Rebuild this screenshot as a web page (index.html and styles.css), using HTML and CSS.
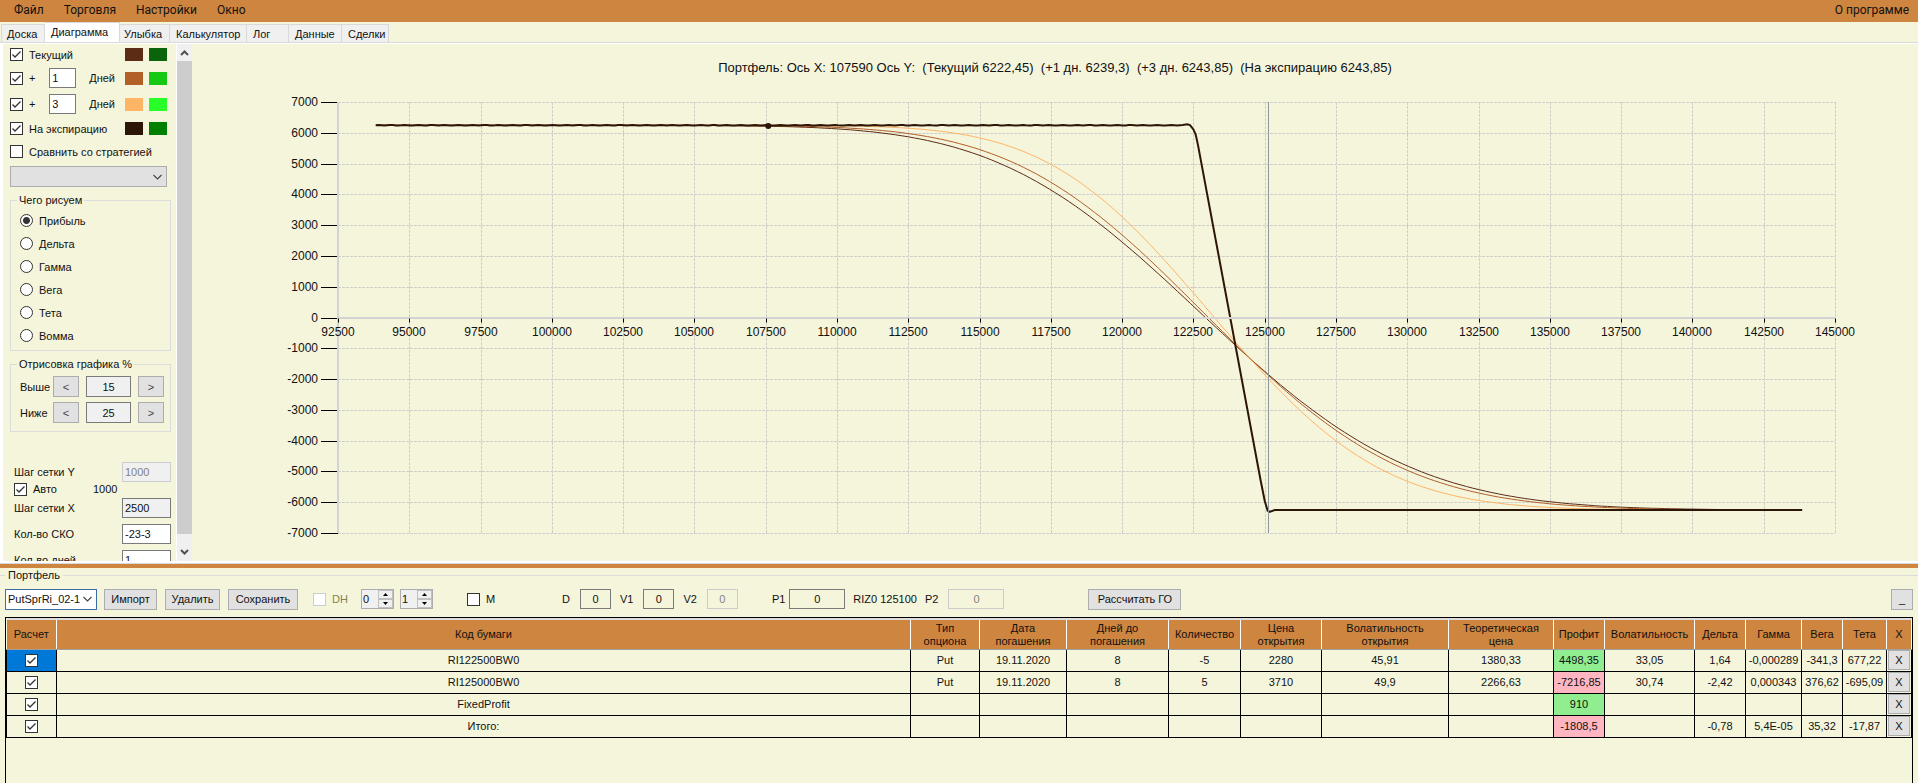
FILE: index.html
```html
<!DOCTYPE html>
<html lang="ru">
<head>
  <meta charset="UTF-8">
  <meta name="viewport" content="width=device-width, initial-scale=1.0">
  <link rel="stylesheet" href="styles.css">
  <title>Портфель</title>
</head>
<body>

<nav class="menu-bar">
  <button class="menu-item">Файл</button>
  <button class="menu-item">Торговля</button>
  <button class="menu-item">Настройки</button>
  <button class="menu-item">Окно</button>
  <button class="menu-item menu-about">О программе</button>
</nav>

<div class="tabs" role="tablist">
  <button class="tab tab-board" role="tab">Доска</button>
  <button class="tab tab-chart tab-active" role="tab" aria-selected="true">Диаграмма</button>
  <button class="tab tab-smile" role="tab">Улыбка</button>
  <button class="tab tab-calc" role="tab">Калькулятор</button>
  <button class="tab tab-log" role="tab">Лог</button>
  <button class="tab tab-data" role="tab">Данные</button>
  <button class="tab tab-deals" role="tab">Сделки</button>
</div>

<main class="workspace">
  <aside class="sidebar">
    <div class="lines">
      <div class="line-row">
        <label class="check-label"><input type="checkbox" checked>Текущий</label>
        <span class="swatch color-now"></span><span class="swatch color-now-alt"></span>
      </div>
      <div class="line-row">
        <label class="check-label"><input type="checkbox" checked>+</label>
        <input class="field days-field" id="days1" type="text" value="1">
        <label class="days-label" for="days1">Дней</label>
        <span class="swatch color-first"></span><span class="swatch color-first-alt"></span>
      </div>
      <div class="line-row">
        <label class="check-label"><input type="checkbox" checked>+</label>
        <input class="field days-field" id="days2" type="text" value="3">
        <label class="days-label" for="days2">Дней</label>
        <span class="swatch color-second"></span><span class="swatch color-second-alt"></span>
      </div>
      <div class="line-row">
        <label class="check-label"><input type="checkbox" checked>На экспирацию</label>
        <span class="swatch color-exp"></span><span class="swatch color-exp-alt"></span>
      </div>
      <div class="line-row">
        <label class="check-label"><input type="checkbox">Сравнить со стратегией</label>
      </div>
    </div>
    <select class="combo strategy-combo" aria-label="Стратегия"><option></option></select>

    <fieldset class="group">
      <legend>Чего рисуем</legend>
      <label class="radio-label"><input type="radio" name="greek" checked>Прибыль</label>
      <label class="radio-label"><input type="radio" name="greek">Дельта</label>
      <label class="radio-label"><input type="radio" name="greek">Гамма</label>
      <label class="radio-label"><input type="radio" name="greek">Вега</label>
      <label class="radio-label"><input type="radio" name="greek">Тета</label>
      <label class="radio-label"><input type="radio" name="greek">Вомма</label>
    </fieldset>

    <fieldset class="group range-group">
      <legend>Отрисовка графика %</legend>
      <div class="range-row">
        <label for="above">Выше</label>
        <button class="btn step-btn">&lt;</button>
        <input class="field range-field" id="above" type="text" value="15">
        <button class="btn step-btn">&gt;</button>
      </div>
      <div class="range-row">
        <label for="below">Ниже</label>
        <button class="btn step-btn">&lt;</button>
        <input class="field range-field" id="below" type="text" value="25">
        <button class="btn step-btn">&gt;</button>
      </div>
    </fieldset>

    <div class="settings">
      <div class="settings-row">
        <label for="stepY">Шаг сетки Y</label>
        <input class="field settings-field" id="stepY" type="text" value="1000" disabled>
      </div>
      <div class="auto-row">
        <label class="check-label"><input type="checkbox" checked>Авто</label>
        <span>1000</span>
      </div>
      <div class="settings-row">
        <label for="stepX">Шаг сетки X</label>
        <input class="field settings-field field-gray" id="stepX" type="text" value="2500">
      </div>
      <div class="settings-row">
        <label for="sko">Кол-во СКО</label>
        <input class="field settings-field" id="sko" type="text" value="-23-3">
      </div>
      <div class="settings-row">
        <label for="dayCount">Кол-во дней</label>
        <input class="field settings-field" id="dayCount" type="text" value="1">
      </div>
    </div>
  </aside>

  <div class="scrollbar">
    <button class="scroll-btn" aria-label="Вверх"><svg width="9" height="6" viewBox="0 0 9 6"><path d="M1 5 L4.5 1.5 L8 5" fill="none" stroke="#505050" stroke-width="2"/></svg></button>
    <div class="scroll-thumb"></div>
    <button class="scroll-btn scroll-down" aria-label="Вниз"><svg width="9" height="6" viewBox="0 0 9 6"><path d="M1 1 L4.5 4.5 L8 1" fill="none" stroke="#505050" stroke-width="2"/></svg></button>
  </div>

  <section class="chart">
    <svg class="chart-svg" id="chart"></svg>
  </section>
</main>

<div class="splitter"></div>

<section class="portfolio">
  <div class="portfolio-title">Портфель</div>

  <div class="toolbar">
    <select class="combo portfolio-combo" aria-label="Портфель"><option>PutSprRi_02-1</option></select>
    <div class="tool-group tool-buttons">
      <button class="btn btn-import">Импорт</button>
      <button class="btn btn-delete">Удалить</button>
      <button class="btn btn-save">Сохранить</button>
    </div>
    <div class="tool-group tool-dh">
      <label class="check-label dh-label"><input type="checkbox" disabled>DH</label>
      <div class="spin">
        <input type="text" value="0" aria-label="DH от">
        <div class="spin-buttons">
          <button aria-label="Больше"><svg width="5" height="3"><path d="M0 3 L2.5 0 L5 3Z"/></svg></button>
          <button aria-label="Меньше"><svg width="5" height="3"><path d="M0 0 L2.5 3 L5 0Z"/></svg></button>
        </div>
      </div>
      <div class="spin">
        <input type="text" value="1" aria-label="DH до">
        <div class="spin-buttons">
          <button aria-label="Больше"><svg width="5" height="3"><path d="M0 3 L2.5 0 L5 3Z"/></svg></button>
          <button aria-label="Меньше"><svg width="5" height="3"><path d="M0 0 L2.5 3 L5 0Z"/></svg></button>
        </div>
      </div>
    </div>
    <label class="check-label tool-m"><input type="checkbox">M</label>
    <div class="tool-group tool-values">
      <label class="value">D<input class="field value-field" type="text" value="0"></label>
      <label class="value">V1<input class="field value-field" type="text" value="0"></label>
      <label class="value">V2<input class="field value-field" type="text" value="0" disabled></label>
    </div>
    <div class="tool-group tool-prices">
      <label class="value price">P1<input class="field price-field" type="text" value="0"></label>
      <span>RIZ0 125100</span>
      <label class="value">P2<input class="field price-field" type="text" value="0" disabled></label>
    </div>
    <button class="btn btn-calc">Рассчитать ГО</button>
    <button class="btn btn-hide">_</button>
  </div>

  <div class="table-wrap">
    <table class="positions">
      <colgroup>
        <col class="w-calc"><col><col class="w-type"><col class="w-date"><col class="w-days"><col class="w-count"><col class="w-price"><col class="w-vol-open"><col class="w-theor"><col class="w-profit"><col class="w-vol"><col class="w-delta"><col class="w-gamma"><col class="w-vega"><col class="w-theta"><col class="w-x">
      </colgroup>
      <thead>
        <tr>
          <th>Расчет</th><th>Код бумаги</th><th>Тип<br>опциона</th><th>Дата<br>погашения</th><th>Дней до<br>погашения</th><th>Количество</th><th>Цена<br>открытия</th><th>Волатильность<br>открытия</th><th>Теоретическая<br>цена</th><th>Профит</th><th>Волатильность</th><th>Дельта</th><th>Гамма</th><th>Вега</th><th>Тета</th><th>X</th>
        </tr>
      </thead>
      <tbody>
        <tr>
          <td class="selected"><input type="checkbox" aria-label="Расчет" checked></td><td>RI122500BW0</td><td>Put</td><td>19.11.2020</td><td>8</td><td>-5</td><td>2280</td><td>45,91</td><td>1380,33</td><td class="gain">4498,35</td><td>33,05</td><td>1,64</td><td>-0,000289</td><td>-341,3</td><td>677,22</td><td><button class="btn btn-x">X</button></td>
        </tr>
        <tr>
          <td><input type="checkbox" aria-label="Расчет" checked></td><td>RI125000BW0</td><td>Put</td><td>19.11.2020</td><td>8</td><td>5</td><td>3710</td><td>49,9</td><td>2266,63</td><td class="loss">-7216,85</td><td>30,74</td><td>-2,42</td><td>0,000343</td><td>376,62</td><td>-695,09</td><td><button class="btn btn-x">X</button></td>
        </tr>
        <tr>
          <td><input type="checkbox" aria-label="Расчет" checked></td><td>FixedProfit</td><td></td><td></td><td></td><td></td><td></td><td></td><td></td><td class="gain">910</td><td></td><td></td><td></td><td></td><td></td><td><button class="btn btn-x">X</button></td>
        </tr>
        <tr>
          <td><input type="checkbox" aria-label="Расчет" checked></td><td>Итого:</td><td></td><td></td><td></td><td></td><td></td><td></td><td></td><td class="loss">-1808,5</td><td></td><td>-0,78</td><td>5,4E-05</td><td>35,32</td><td>-17,87</td><td><button class="btn btn-x">X</button></td>
        </tr>
      </tbody>
    </table>
  </div>
</section>

<script src="chart.js"></script>
</body>
</html>
```
FILE: styles.css
```css
* {
  box-sizing: border-box;
}

body {
  margin: 0;
  height: 100vh;
  display: flex;
  flex-direction: column;
  overflow: hidden;
  background-color: #f5f5dc;
  color: #111;
  font-family: "Liberation Sans", Arial, sans-serif;
  font-size: 11px;
  line-height: 14px;
}

button, input, select {
  font: inherit;
  color: inherit;
  margin: 0;
  padding: 0;
}

/* menu */
.menu-bar {
  display: flex;
  align-items: center;
  height: 22px;
  padding: 0 9px 2px 6px;
  background-color: #cd853f;
  font-family: Roboto, sans-serif;
  font-size: 12px;
}

.menu-item {
  border: 0;
  background: none;
  padding: 0 8px;
  margin-right: 4px;
}

.menu-about {
  margin-left: auto;
  margin-right: 0;
  padding-right: 0;
}

/* tabs */
.tabs {
  display: flex;
  align-items: flex-end;
  height: 21px;
  padding-left: 1px;
  border-bottom: 1px solid #d9d9d9;
}

.tab {
  height: 18px;
  border: 1px solid #d9d9d9;
  border-left-width: 0;
  border-bottom: 0;
  background-color: #f0f0f0;
  text-align: left;
  padding-left: 6px;
  white-space: nowrap;
}

.tab-active {
  height: 20px;
  padding-bottom: 2px;
  background-color: #fff;
}

.tab-board { width: 44px; border-left-width: 1px; padding-left: 5px; }
.tab-chart { width: 75px; }
.tab-smile { width: 50px; padding-left: 4px; }
.tab-calc { width: 77px; }
.tab-log { width: 42px; }
.tab-data { width: 53px; }
.tab-deals { width: 47px; }

.workspace {
  flex: 1;
  min-height: 0;
  display: flex;
  border-top: 1px solid #fff;
  border-bottom: 2px solid #fff;
  border-left: 3px solid #fff;
}

/* controls */
input[type="checkbox"], input[type="radio"] {
  appearance: none;
  flex: none;
  width: 13px;
  height: 13px;
  border: 1px solid #333;
  background: #fff center / 11px 11px no-repeat;
}

input[type="checkbox"]:checked {
  background-image: url("data:image/svg+xml,%3Csvg xmlns='http://www.w3.org/2000/svg' viewBox='0 0 11 11'%3E%3Cpath d='M1.5 5.5 L4 8 L9.5 2.5' fill='none' stroke='%23333' stroke-width='1.3'/%3E%3C/svg%3E");
}

input[type="checkbox"]:disabled {
  border-color: #ccc;
}

input[type="radio"] {
  border-radius: 50%;
}

input[type="radio"]:checked {
  background-image: radial-gradient(circle, #333 3px, transparent 4px);
}

.check-label {
  display: flex;
  align-items: center;
  gap: 6px;
  white-space: nowrap;
}

.field {
  min-width: 0;
  border: 1px solid #7a7a7a;
  background-color: #fff;
  padding: 0 2px;
}

.field:disabled {
  border-color: #ccc;
  background-color: #f0f0f0;
  color: #838383;
}

.btn {
  border: 1px solid #adadad;
  background-color: #e1e1e1;
  white-space: nowrap;
}

.combo {
  appearance: none;
  height: 21px;
  border: 1px solid #adadad;
  border-radius: 0;
  background: #e1e1e1 url("data:image/svg+xml,%3Csvg xmlns='http://www.w3.org/2000/svg' viewBox='0 0 9 6'%3E%3Cpath d='M.5 1 L4.5 5 L8.5 1' fill='none' stroke='%23444' stroke-width='1.1'/%3E%3C/svg%3E") right 4px center / 9px 6px no-repeat;
}

/* sidebar */
.sidebar {
  flex: none;
  width: 173px;
  padding: 0 5px 0 7px;
  overflow: hidden;
}

.lines {
  display: grid;
  grid-template-rows: 21px 26px 26px 23px 23px;
}

.line-row {
  display: flex;
  align-items: center;
  padding-right: 4px;
}

.line-row .check-label {
  flex: 1;
}

.days-field {
  width: 27px;
  height: 20px;
}

.days-label {
  margin: 0 10px 0 13px;
}

.swatch {
  width: 18px;
  height: 13px;
}

.swatch + .swatch {
  margin-left: 6px;
}

.color-now { background-color: #5c2c14; }
.color-now-alt { background-color: #0a640a; }
.color-first { background-color: #b35f28; }
.color-first-alt { background-color: #14c814; }
.color-second { background-color: #ffb466; }
.color-second-alt { background-color: #28ff28; }
.color-exp { background-color: #2e1606; }
.color-exp-alt { background-color: #008000; }

.strategy-combo {
  display: block;
  width: 157px;
  margin-top: 3px;
}

.group {
  margin: 6px 0 0;
  padding: 2px 8px 3px 9px;
  border: 1px solid #dcdcdc;
  min-width: 0;
}

.group legend {
  height: 14px;
  margin-left: -3px;
  padding: 0 2px;
}

.radio-label {
  display: flex;
  align-items: center;
  gap: 6px;
  height: 23px;
}

.range-group {
  padding: 5px 6px 8px 9px;
}

.range-row {
  display: flex;
  align-items: center;
  gap: 7px;
}

.range-row + .range-row {
  margin-top: 5px;
}

.range-row label {
  flex: 1;
  margin-right: -7px;
}

.step-btn {
  width: 26px;
  height: 21px;
  color: #444;
}

.range-field {
  width: 45px;
  height: 21px;
  background-color: #f0f0f0;
  text-align: center;
}

.settings {
  margin-top: 30px;
  padding-left: 4px;
}

.settings-row {
  display: flex;
  align-items: center;
  justify-content: space-between;
  height: 20px;
}

.settings-row + .settings-row {
  margin-top: 6px;
}

.auto-row {
  display: flex;
  align-items: center;
  gap: 36px;
  height: 14px;
  margin-bottom: 2px;
}

.settings-field {
  width: 49px;
  height: 20px;
}

.field-gray {
  background-color: #f0f0f0;
}

.scrollbar {
  flex: none;
  width: 16px;
  display: flex;
  flex-direction: column;
  background-color: #f0f0f0;
  border-left: 1px solid #fff;
}

.scroll-btn {
  height: 17px;
  border: 0;
  background: none;
  line-height: 0;
}

.scroll-down {
  height: 27px;
  padding-top: 8px;
}

.scroll-thumb {
  flex: 1;
  background-color: #cdcdcd;
}

/* chart */
.chart {
  flex: 1;
  min-width: 0;
}

.chart-svg {
  display: block;
  width: 100%;
  height: 100%;
}

.chart-svg text {
  font-size: 12px;
  fill: #111;
}

.chart-svg .chart-title {
  font-size: 13px;
  white-space: pre;
}

.grid-line { stroke: #cfcfc8; stroke-dasharray: 3 1; }
.axis-line { stroke: #d3d3d3; stroke-width: 2; }
.tick { stroke: #000; }
.price-line { stroke: #8b979d; }
.curve { fill: none; }
.curve-now { stroke: #5c2c14; }
.curve-first { stroke: #b35f28; }
.curve-second { stroke: #ffb466; }
.curve-exp { stroke: #2e1606; stroke-width: 2; }
.cursor-dot { fill: #2e1606; }

.splitter {
  height: 5px;
  border-top: 1px solid #d9d9d9;
  background-color: #cd853f;
}

/* portfolio */
.portfolio {
  padding: 0 5px;
}

.portfolio-title {
  display: flex;
  align-items: center;
  gap: 3px;
  height: 14px;
  margin: 0 -5px;
}

.portfolio-title::before, .portfolio-title::after {
  content: "";
  width: 5px;
  height: 1px;
  background-color: #dcdcdc;
}

.portfolio-title::after {
  flex: 1;
}

.toolbar {
  display: flex;
  align-items: center;
  height: 35px;
  padding-bottom: 1px;
}

.toolbar .btn {
  height: 21px;
}

.tool-group {
  display: flex;
  align-items: center;
}

.portfolio-combo {
  width: 92px;
  padding-left: 2px;
  border-color: #3c6ea5;
  background-color: #fff;
}

.tool-buttons {
  gap: 8px;
  margin-left: 7px;
}

.btn-import { width: 53px; }
.btn-delete { width: 55px; }
.btn-save { width: 70px; }

.tool-dh {
  gap: 6px;
  margin-left: 15px;
}

.dh-label {
  width: 42px;
  color: #83834a;
}

.spin {
  display: flex;
  width: 33px;
  height: 20px;
  border: 1px solid #adadad;
  background-color: #f0f0f0;
}

.spin input {
  flex: 1;
  min-width: 0;
  border: 0;
  background: none;
  padding-left: 1px;
}

.spin-buttons {
  display: flex;
  flex-direction: column;
  width: 15px;
}

.spin-buttons button {
  flex: 1;
  display: flex;
  align-items: center;
  justify-content: center;
  border: 1px solid #c0c0c0;
  background-color: #f0f0f0;
}

.tool-m {
  width: 95px;
  margin-left: 34px;
}

.tool-values {
  gap: 9px;
}

.value {
  display: flex;
  align-items: center;
  gap: 10px;
}

.value-field {
  width: 31px;
  height: 20px;
  text-align: center;
}

.toolbar .field {
  background-color: #f5f5dc;
}

.tool-prices {
  gap: 8px;
  margin-left: 34px;
}

.price {
  gap: 4px;
}

.price-field {
  width: 56px;
  height: 20px;
  text-align: center;
}

.btn-calc {
  width: 93px;
  margin-left: 84px;
}

.btn-hide {
  width: 22px;
  margin-left: auto;
}

.table-wrap {
  height: 166px;
  border: 1px solid #000;
  border-bottom: 0;
}

.positions {
  width: 100%;
  table-layout: fixed;
  border-collapse: collapse;
  text-align: center;
}

.positions th {
  height: 30px;
  padding: 1px 0 0;
  border-top: 2px solid #ddd;
  border-bottom: 1px solid #a0a0a0;
  border-right: 1px solid #fff;
  background-color: #cd853f;
  font-weight: normal;
  line-height: 13px;
  white-space: nowrap;
}

.positions td {
  height: 22px;
  padding: 0;
  border: 1px solid #000;
  white-space: nowrap;
}

.positions thead + tbody tr:first-child td {
  border-top-color: #a0a0a0;
}

.positions td input {
  display: block;
  margin: 0 auto;
}

.positions .selected { background-color: #0078d7; }
.positions .gain { background-color: #90ee90; }
.positions .loss { background-color: #ffb6c1; }

.btn-x {
  display: block;
  width: 22px;
  height: 20px;
  margin: 0 auto;
}

.w-calc { width: 50px; }
.w-type { width: 69px; }
.w-date { width: 87px; }
.w-days { width: 102px; }
.w-count { width: 72px; }
.w-price { width: 81px; }
.w-vol-open { width: 127px; }
.w-theor { width: 105px; }
.w-profit { width: 51px; }
.w-vol { width: 90px; }
.w-delta { width: 51px; }
.w-gamma { width: 56px; }
.w-vega { width: 41px; }
.w-theta { width: 44px; }
.w-x { width: 25px; }
```
FILE: chart.js
```js
const svg = document.getElementById('chart');
const X_MIN = 92500, X_MAX = 145000, X_STEP = 2500;
const Y_MIN = -7000, Y_MAX = 7000, Y_STEP = 1000;
const START = 93825, END = 143850;
const FIXED = -6256;

function add(tag, attrs, text) {
  const el = document.createElementNS('http://www.w3.org/2000/svg', tag);
  for (const key in attrs) {
    el.setAttribute(key, attrs[key]);
  }
  if (text !== undefined) {
    el.textContent = text;
  }
  svg.appendChild(el);
}

// Normal distribution, Abramowitz-Stegun approximation
function cdf(x) {
  const t = 1 / (1 + 0.2316419 * Math.abs(x));
  const d = Math.exp(-x * x / 2) / Math.sqrt(2 * Math.PI);
  const p = d * t * (0.31938153 + t * (-0.356563782 + t * (1.781477937 + t * (-1.821255978 + t * 1.330274429))));
  return x > 0 ? 1 - p : p;
}

function put(price, strike, vol, days) {
  const s = vol * Math.sqrt(days / 365);
  const d1 = Math.log(price / strike) / s + s / 2;
  return strike * cdf(s - d1) - price * cdf(-d1);
}

function profit(price, days) {
  return 5 * (put(price, 125000, 0.3074, days) - put(price, 122500, 0.3305, days)) + FIXED;
}

function drawChart() {
  const width = svg.clientWidth;
  const height = svg.clientHeight;
  const left = 146, right = width - 83, top = 58, bottom = height - 28;
  const px = v => left + (v - X_MIN) / (X_MAX - X_MIN) * (right - left);
  const py = v => bottom - (v - Y_MIN) / (Y_MAX - Y_MIN) * (bottom - top);
  const snap = v => Math.round(v) + 0.5;
  svg.innerHTML = '';

  for (let x = X_MIN + X_STEP; x <= X_MAX; x += X_STEP) {
    add('line', { class: 'grid-line', x1: snap(px(x)), x2: snap(px(x)), y1: top, y2: bottom });
  }
  for (let y = Y_MIN; y <= Y_MAX; y += Y_STEP) {
    add('line', { class: 'grid-line', x1: left, x2: right, y1: snap(py(y)), y2: snap(py(y)) });
    add('line', { class: 'tick', x1: left - 17, x2: left, y1: snap(py(y)), y2: snap(py(y)) });
    add('text', { x: left - 20, y: Math.round(py(y)) + 4, 'text-anchor': 'end' }, y);
  }

  // curves
  [['now', 7.95], ['first', 6.95], ['second', 4.95]].forEach(([name, days]) => {
    const points = [];
    for (let x = START; x <= END; x += 225) {
      points.push(px(x).toFixed(1) + ',' + py(profit(x, days)).toFixed(1));
    }
    add('polyline', { class: 'curve curve-' + name, points: points.join(' ') });
  });

  const exp = [];
  for (let x = START; x < 122200; x += 100) {
    exp.push([x, 6244 + 6 * Math.sin(x / 75)]);
  }
  exp.push([122280, 6275], [122380, 6250], [122500, 6110], [122580, 5940], [122660, 5600], [124860, -5300], [125000, -5950], [125100, -6270], [125180, -6310], [125350, FIXED], [END, FIXED]);
  add('polyline', { class: 'curve curve-exp', points: exp.map(p => px(p[0]).toFixed(1) + ',' + py(p[1]).toFixed(1)).join(' ') });

  add('line', { class: 'axis-line', x1: left, x2: left, y1: top, y2: bottom });
  add('line', { class: 'axis-line', x1: left, x2: right, y1: Math.round(py(0)), y2: Math.round(py(0)) });
  add('line', { class: 'price-line', x1: snap(px(125100)), x2: snap(px(125100)), y1: top, y2: bottom });
  for (let x = X_MIN; x <= X_MAX; x += X_STEP) {
    add('line', { class: 'tick', x1: snap(px(x)), x2: snap(px(x)), y1: py(0) + 1, y2: py(0) + 5 });
    add('text', { x: Math.round(px(x)), y: Math.round(py(0)) + 18, 'text-anchor': 'middle' }, x);
  }
  add('circle', { class: 'cursor-dot', cx: px(107590), cy: py(6222), r: 3 });
  add('text', { class: 'chart-title', x: Math.round(width / 2), y: 28, 'text-anchor': 'middle' },
    'Портфель: Ось X: 107590 Ось Y:  (Текущий 6222,45)  (+1 дн. 6239,3)  (+3 дн. 6243,85)  (На экспирацию 6243,85)');
}

drawChart();
window.addEventListener('resize', drawChart);
```
